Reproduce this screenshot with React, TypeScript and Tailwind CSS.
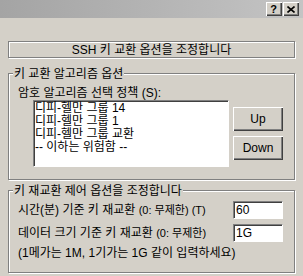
import React from "react"

// Classic Windows dialog: SSH key exchange options

const etched = "border border-[#808080] shadow-[inset_1px_1px_0_#fff,1px_1px_0_#fff]"
const sunken =
  "border border-t-[#808080] border-l-[#808080] border-b-white border-r-white shadow-[inset_1px_1px_0_#404040] bg-white"
const raised =
  "bg-[#d4d0c8] shadow-[inset_1px_1px_0_#fff,inset_-1px_-1px_0_#404040,inset_-2px_-2px_0_#808080]"

const KEX = ["디피-헬만 그룹 14", "디피-헬만 그룹 1", "디피-헬만 그룹 교환", "-- 이하는 위험함 --"]

function TitleButton({ children }: { children: React.ReactNode }) {
  return (
    <div className={`w-[16px] h-[14px] flex items-center justify-center ${raised}`}>{children}</div>
  )
}

function Field({ value }: { value: string }) {
  return (
    <div className={`w-[50px] h-[18px] flex items-center pl-[2px] leading-[14px] ${sunken}`}>{value}</div>
  )
}

export default function App() {
  return (
    <div
      className="w-[303px] h-[276px] overflow-hidden bg-[#d4d0c8] text-[12px] text-black"
      style={{ fontFamily: '"Liberation Sans", "Noto Sans CJK KR", sans-serif' }}
    >
      <div className="h-[18px] flex items-center justify-end gap-[1px] pr-[4px] bg-gradient-to-r from-[#a4a4a4] to-[#c4c4c4]">
        <TitleButton>
          <span className="font-bold text-[11px] leading-none pr-[1px]">?</span>
        </TitleButton>
        <TitleButton>
          <svg width="8" height="7" viewBox="0 0 8 7">
            <path d="M0.5 0.5 L7.5 6.5 M7.5 0.5 L0.5 6.5" stroke="#000" strokeWidth="1.6" />
          </svg>
        </TitleButton>
      </div>

      <div className="px-[8px] pt-[23px]">
        <div className={`h-[17px] flex items-center justify-center leading-[14px] ${etched}`}>
          SSH 키 교환 옵션을 조정합니다
        </div>

        <div className={`relative mt-[15px] h-[107px] pl-[9px] pt-[12px] ${etched}`}>
          <span className="absolute left-[4px] -top-[7px] px-[1px] bg-[#d4d0c8] leading-[14px]">
            키 교환 알고리즘 옵션
          </span>
          <div className="leading-[14px]">암호 알고리즘 선택 정책 (S):</div>
          <div className="flex">
            <div className={`ml-[15px] w-[196px] h-[67px] pl-[1px] pt-[1px] leading-[13px] ${sunken}`}>
              {KEX.map((k) => (
                <div key={k}>{k}</div>
              ))}
            </div>
            <div className="ml-[4px] mt-[7px] flex flex-col gap-[5px]">
              <div className={`w-[50px] h-[24px] flex items-center justify-center ${raised}`}>Up</div>
              <div className={`w-[50px] h-[24px] flex items-center justify-center ${raised}`}>Down</div>
            </div>
          </div>
        </div>

        <div className={`relative mt-[10px] h-[83px] pl-[9px] pr-[11px] pt-[10px] ${etched}`}>
          <span className="absolute left-[4px] -top-[7px] px-[1px] bg-[#d4d0c8] leading-[14px]">
            키 재교환 제어 옵션을 조정합니다
          </span>
          <div className="flex items-center justify-between">
            <span className="leading-[14px]">
              시간(분) 기준 키 재교환 <span className="text-[11px]">(0: 무제한) (T)</span>
            </span>
            <Field value="60" />
          </div>
          <div className="mt-[5px] flex items-center justify-between">
            <span className="leading-[14px]">
              데이터 크기 기준 키 재교환 <span className="text-[11px]">(0: 무제한)</span>
            </span>
            <Field value="1G" />
          </div>
          <div className="mt-[4px] leading-[14px]">(1메가는 1M, 1기가는 1G 같이 입력하세요)</div>
        </div>
      </div>
    </div>
  )
}
